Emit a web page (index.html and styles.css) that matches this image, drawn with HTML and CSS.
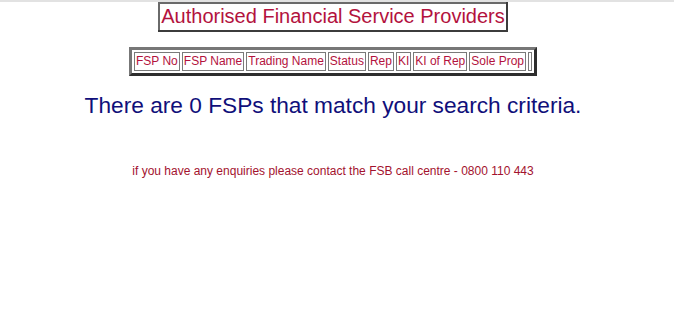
FILE: index.html
```html
<!DOCTYPE html>
<html>
<head>
    <link rel="stylesheet" href="styles.css">
</head>
<body>
<div class="page">
    <table class="title-box">
        <tr><td>Authorised Financial Service Providers</td></tr>
    </table>
    <table class="results">
        <tr>
            <td>FSP No</td>
            <td>FSP Name</td>
            <td>Trading Name</td>
            <td>Status</td>
            <td>Rep</td>
            <td>KI</td>
            <td>KI of Rep</td>
            <td>Sole Prop</td>
            <td class="empty"></td>
        </tr>
    </table>
    <p class="none-found">There are 0 FSPs that match your search criteria.</p>
    <p class="enquiries">if you have any enquiries please contact the FSB call centre - 0800 110 443</p>
</div>
</body>
</html>
```

FILE: styles.css
```css
body {
    margin: 0;
    background-color: #fff;
    font-family: "Liberation Sans", Arial, sans-serif;
}
.page {
    border-top: 2px solid #e2e2e2;
    padding: 0 8px 0 0;
    text-align: center;
}
.title-box {
    margin: 0 auto;
    border-collapse: collapse;
    border: 2px solid #3c3c3c;
    border-top-color: #6a6a6a;
    border-left-color: #6a6a6a;
}
.title-box td {
    padding: 1px 1px 3px 1px;
    font-size: 20px;
    line-height: 22px;
    color: #b3123d;
}
.results {
    margin: 15px auto 0 auto;
    border: 3px solid #2e2e2e;
    border-top-color: #777;
    border-left-color: #777;
    border-spacing: 2px;
}
.results td {
    border: 1px solid #7a7a7a;
    padding: 1px 1px 1px 1px;
    font-size: 12px;
    line-height: 15px;
    color: #b3123d;
}
.results td.empty {
    width: 0;
}
.none-found {
    margin: 15px 0 0 0;
    font-size: 22.7px;
    line-height: 28px;
    color: #100f7a;
}
.enquiries {
    margin: 45px 0 0 0;
    font-size: 12px;
    line-height: 14px;
    color: #a3122e;
}
```
